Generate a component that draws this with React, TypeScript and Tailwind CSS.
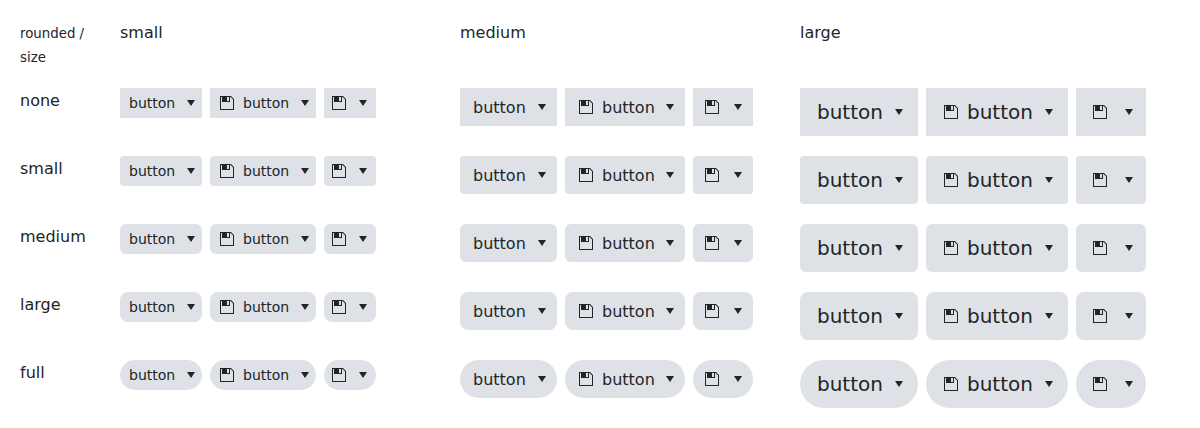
import React from 'react';

type Size = 'small' | 'medium' | 'large';

const sizes: Size[] = ['small', 'medium', 'large'];

const rows = [
  { name: 'none', radius: 'rounded-none' },
  { name: 'small', radius: 'rounded-[4px]' },
  { name: 'medium', radius: 'rounded-[6px]' },
  { name: 'large', radius: 'rounded-[8px]' },
  { name: 'full', radius: 'rounded-full' },
];

const styles = {
  small: {
    button: 'h-[30px] text-[14px]',
    label: '',
    text: 'w-[82px] pl-[9px] pr-[3px]',
    iconText: 'w-[106px] pl-[9px] pr-[3px]',
    icon: 'w-[52px] pl-[7px] pr-[5px]',
  },
  medium: {
    button: 'h-[38px] text-[16px]',
    label: 'pt-0.5',
    text: 'w-[97px] pl-[13px] pr-[7px]',
    iconText: 'w-[120px] pl-[13px] pr-[7px]',
    icon: 'w-[60px] pl-[11px] pr-[7px]',
  },
  large: {
    button: 'h-[48px] text-[20px]',
    label: '',
    text: 'w-[118px] pl-[17px] pr-[11px]',
    iconText: 'w-[142px] pl-[17px] pr-[11px]',
    icon: 'w-[70px] pl-[16px] pr-[9px]',
  },
};

function SaveIcon() {
  return (
    <svg className="size-4 shrink-0" viewBox="0 0 16 16" fill="currentColor">
      <path
        fillRule="evenodd"
        d="M1 1h11l3 3v11H1zM2 2v12h12V4.4L11.6 2H11v5H3V2zM8 2v4h2V2z"
      />
    </svg>
  );
}

function CaretIcon() {
  return (
    <svg className="size-4 shrink-0" viewBox="0 0 16 16" fill="currentColor">
      <path d="M4 5h8l-4 6z" />
    </svg>
  );
}

function DropDownButton({ size, radius, kind }: { size: Size; radius: string; kind: 'text' | 'iconText' | 'icon' }) {
  const style = styles[size];
  return (
    <button
      type="button"
      className={`flex shrink-0 items-center justify-between bg-[#dee2e6] ${style.button} ${style[kind]} ${radius}`}
    >
      <span className="flex items-center gap-2">
        {kind !== 'text' && <SaveIcon />}
        {kind !== 'icon' && <span className={style.label}>button</span>}
      </span>
      <CaretIcon />
    </button>
  );
}

export default function App() {
  return (
    <div className="grid grid-cols-[80px_320px_320px_360px] gap-5 bg-white p-5 font-['DejaVu_Sans',sans-serif] text-[16px] leading-6 text-[#212529]">
      <div className="h-12 pt-px">
        <span className="text-[13.333px] leading-none">rounded / size</span>
      </div>
      {sizes.map((size) => (
        <div key={size} className="pt-px">
          {size}
        </div>
      ))}
      {rows.map(({ name, radius }) => (
        <React.Fragment key={name}>
          <div className="h-12 pt-px">{name}</div>
          {sizes.map((size) => (
            <div key={size} className="flex items-start gap-2">
              <DropDownButton size={size} radius={radius} kind="text" />
              <DropDownButton size={size} radius={radius} kind="iconText" />
              <DropDownButton size={size} radius={radius} kind="icon" />
            </div>
          ))}
        </React.Fragment>
      ))}
    </div>
  );
}
